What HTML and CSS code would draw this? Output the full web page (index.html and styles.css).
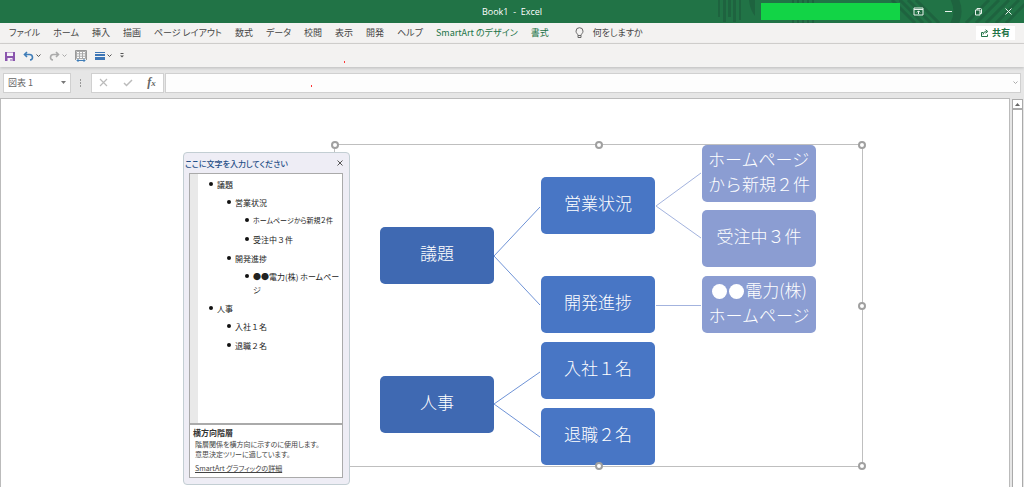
FILE: index.html
```html
<!DOCTYPE html>
<html lang="ja">
<head>
<meta charset="utf-8">
<title>Book1 - Excel</title>
<link rel="stylesheet" href="styles.css">
</head>
<body>
<div class="app">
  <header class="titlebar">
    <svg class="titlebar-art" width="320" height="23" viewBox="0 0 320 23" aria-hidden="true">
      <g fill="#1e633f">
        <path d="M14 0h2v17h-2zM19 0h3v22h-3zM24 0h3v17h-3zM29 0h3v22h-3zM35 0h2v20h-2zM45 0h6v16q-5-6-6-16z"/>
        <path d="M88 0h2v23h-2zM93 0h2v23h-2zM98 0h2v23h-2zM103 0h2v23h-2zM108 0h2v23h-2z"/>
      </g>
      <g stroke="#1e633f" stroke-width="3" fill="none">
        <path d="M188 0l23 23M196 0l23 23M204 0l23 23M212 0l23 23M262 23l23-23M272 23l23-23M282 23l23-23M292 23l23-23M302 23l23-23"/>
        <path d="M248-6q11 18 0 34" stroke-width="8"/>
      </g>
    </svg>
    <h1 class="title">Book1&nbsp; -&nbsp; Excel</h1>
    <div class="window-tools">
      <span class="account"></span>
      <button class="win-btn" aria-label="リボンの表示オプション"><svg width="11" height="9" viewBox="0 0 11 9"><path d="M1 1h9v7H1zM1 2.500h9M5.500 7V4M4 5.300l1.500-1.500L7 5.300"/></svg></button>
      <button class="win-btn" aria-label="最小化"><svg width="11" height="9" viewBox="0 0 11 9"><path d="M2 4.500h7"/></svg></button>
      <button class="win-btn" aria-label="元に戻す"><svg width="11" height="9" viewBox="0 0 11 9"><path d="M2.500 3h4.500v5H2.500zM4 3V1.500h3.500q1 0 1 1V6.500H7"/></svg></button>
      <button class="win-btn" aria-label="閉じる"><svg width="11" height="9" viewBox="0 0 11 9"><path d="M2.500 1.500l6 6M8.500 1.500l-6 6"/></svg></button>
    </div>
  </header>

  <nav class="ribbon">
    <button class="tab">ファイル</button>
    <button class="tab">ホーム</button>
    <button class="tab">挿入</button>
    <button class="tab">描画</button>
    <button class="tab">ページ レイアウト</button>
    <button class="tab">数式</button>
    <button class="tab">データ</button>
    <button class="tab">校閲</button>
    <button class="tab">表示</button>
    <button class="tab">開発</button>
    <button class="tab">ヘルプ</button>
    <button class="tab tab-context">SmartArt のデザイン</button>
    <button class="tab tab-context">書式</button>
    <button class="tab tell-me"><svg width="9" height="12" viewBox="0 0 9 12"><path d="M3 8.500C3 7 1 6.300 1 4.200a3.500 3.500 0 0 1 7 0C8 6.300 6 7 6 8.500zM3 8.500v2h3v-2"/></svg>何をしますか</button>
    <button class="share"><svg width="8" height="8" viewBox="0 0 8 8"><path d="M2 3.500H.5v4h6v-2M2 5.500q0-3 3.500-3M4.500.8l2.300 1.700-2.300 1.700"/></svg>共有</button>
  </nav>

  <div class="toolbar">
    <button class="tool" aria-label="保存"><svg width="10" height="10" viewBox="0 0 10 10"><path fill="#8a55ad" d="M0 1h10v9H0z"/><path fill="#f6f2f9" d="M2 1.500h6V5H2zM2.500 7h5v3h-1V8h-1v2h-3z"/></svg></button>
    <button class="tool" aria-label="元に戻す"><svg width="11" height="10" viewBox="0 0 11 10"><path fill="none" stroke="#3f7db8" stroke-width="1.600" d="M4 1L1.500 3.500 4 6M1.500 3.500H6.500q3 0 3 3Q9.500 8.700 7 9"/></svg><svg class="caret" width="5" height="3" viewBox="0 0 5 3"><path d="M.5.5l2 2 2-2"/></svg></button>
    <button class="tool" aria-label="やり直し"><svg width="11" height="10" viewBox="0 0 11 10"><path fill="none" stroke="#aaa" stroke-width="1.600" d="M7 1l2.500 2.500L7 6M9.500 3.500h-5q-3 0-3 3Q1.500 8.700 4 9"/></svg><svg class="caret caret-off" width="5" height="3" viewBox="0 0 5 3"><path d="M.5.5l2 2 2-2"/></svg></button>
    <button class="tool" aria-label="列の幅"><svg width="12" height="12" viewBox="0 0 12 12"><path fill="#fff" stroke="#aaa" d="M1.500 1.500h9v7h-9zM4.500 1v8M7.500 1v8M1 3.800h10M1 6.200h10"/><path fill="none" stroke="#999" d="M.5 10V.5h11V10"/><path fill="none" stroke="#3f7db8" d="M2 10.500h8M3.500 9L2 10.500 3.500 12M8.500 9l1.500 1.500L8.500 12"/></svg></button>
    <button class="tool" aria-label="線の太さ"><svg width="10" height="10" viewBox="0 0 10 10"><path fill="#3d76b6" d="M0 1h10v1H0zM0 3h10v2H0zM0 6h10v3H0z"/></svg><svg class="caret" width="5" height="3" viewBox="0 0 5 3"><path d="M.5.5l2 2 2-2"/></svg></button>
    <button class="tool" aria-label="カスタマイズ"><svg width="4" height="5" viewBox="0 0 4 5"><path fill="#555" d="M.5 0h3v1h-3zM0 2.500h4L2 4.500z"/></svg></button>
    <span class="red-dot"></span>
  </div>

  <div class="formula-bar">
    <label class="name-box"><input value="図表 1" aria-label="名前ボックス"><svg width="5" height="3" viewBox="0 0 5 3"><path fill="#777" d="M0 0h5L2.500 3z"/></svg></label>
    <svg class="grip" width="2" height="8" viewBox="0 0 2 8"><path fill="#999" d="M0 0h1v2H0zM0 3h1v2H0zM0 6h1v2H0z"/></svg>
    <div class="formula-actions">
      <button aria-label="キャンセル"><svg width="9" height="9" viewBox="0 0 9 9"><path fill="none" stroke="#bbb" stroke-width="1.200" d="M1 1l7 7M8 1L1 8"/></svg></button>
      <button aria-label="入力"><svg width="10" height="9" viewBox="0 0 10 9"><path fill="none" stroke="#bbb" stroke-width="1.500" d="M1 5l2.500 2.500L9 2"/></svg></button>
      <button class="fx" aria-label="関数の挿入"><i>f</i><i class="fx-sub">x</i></button>
    </div>
    <div class="formula-field">
      <input aria-label="数式バー">
      <span class="red-dot field-dot"></span>
      <svg class="caret caret-off" width="5" height="3" viewBox="0 0 5 3"><path d="M.5.5l2 2 2-2"/></svg>
    </div>
  </div>

  <main class="workspace">
    <div class="sheet">
      <section class="smartart" aria-label="SmartArt">
        <svg class="links" width="527" height="322" viewBox="0 0 527 322" aria-hidden="true">
          <path d="M205 62L159 111l46 49M205 227l-46 32 46 33"/>
          <path class="link-light" d="M366 28l-45 33 45 32M321 160.500h45"/>
        </svg>
        <div class="node root agenda">議題</div>
        <div class="node root people">人事</div>
        <div class="node mid sales">営業状況</div>
        <div class="node mid dev">開発進捗</div>
        <div class="node mid join">入社１名</div>
        <div class="node mid leave">退職２名</div>
        <div class="node leaf web">ホームページ<br>から新規２件</div>
        <div class="node leaf orders">受注中３件</div>
        <div class="node leaf power"><span><span class="disc"></span><span class="disc"></span>電力(株)</span>ホームページ</div>
        <span class="handle nw"></span><span class="handle n"></span><span class="handle ne"></span>
        <span class="handle e"></span><span class="handle se"></span><span class="handle s"></span>
      </section>

      <aside class="text-pane">
        <div class="pane-head">
          <h2>ここに文字を入力してください</h2>
          <button aria-label="閉じる"><svg width="6" height="6" viewBox="0 0 6 6"><path d="M.5.5l5 5M5.500.5l-5 5"/></svg></button>
        </div>
        <div class="outline">
          <ul>
            <li>議題
              <ul>
                <li>営業状況
                  <ul>
                    <li><span class="compact">ホームページから新規２件</span></li>
                    <li>受注中３件</li>
                  </ul>
                </li>
                <li>開発進捗
                  <ul>
                    <li class="kana">●●電力(株) ホームペー<br>ジ</li>
                  </ul>
                </li>
              </ul>
            </li>
            <li>人事
              <ul>
                <li>入社１名</li>
                <li>退職２名</li>
              </ul>
            </li>
          </ul>
        </div>
        <div class="about">
          <h3>横方向階層</h3>
          <p>階層関係を横方向に示すのに使用します。<br>意思決定ツリーに適しています。</p>
          <a href="#">SmartArt グラフィックの詳細</a>
        </div>
      </aside>
    </div>
    <div class="scrollbar">
      <button aria-label="上へ"><svg width="5" height="3" viewBox="0 0 5 3"><path fill="#666" d="M0 3h5L2.500 0z"/></svg></button>
      <div class="thumb"></div>
    </div>
  </main>
</div>
</body>
</html>
```

FILE: styles.css
```css
* { box-sizing: border-box; }

body {
  margin: 0;
  font-family: "Noto Sans CJK JP", "Open Sans", sans-serif;
  font-size: 9px;
  font-feature-settings: "palt";
  color: #444;
}

button, input {
  font: inherit;
  font-feature-settings: inherit;
  color: inherit;
  border: 0;
  padding: 0;
  margin: 0;
  background: none;
}

svg { display: block; flex: none; }
h1, h2, h3, p, ul { margin: 0; padding: 0; }

.app {
  display: flex;
  flex-direction: column;
  height: 100vh;
  overflow: hidden;
  background: #e6e6e6;
}

/* Title bar */
.titlebar {
  position: relative;
  display: grid;
  grid-template-columns: 1fr auto 1fr;
  align-items: center;
  height: 23px;
  flex: none;
  background: #217346;
  color: #fff;
}
.titlebar-art { position: absolute; right: 0; top: 0; }
.title {
  grid-column: 2;
  font: 400 9px/20px "Open Sans", sans-serif;
}
.window-tools {
  position: relative;
  display: flex;
  align-items: center;
  justify-content: flex-end;
  padding-right: 1px;
}
.account {
  width: 139px;
  height: 17px;
  margin-right: 3px;
  background: #12d446;
}
.win-btn {
  display: flex;
  justify-content: center;
  width: 30px;
}
.win-btn svg { fill: none; stroke: #e8f2ec; }

/* Ribbon tabs */
.ribbon {
  display: flex;
  align-items: center;
  gap: 13px;
  height: 21px;
  flex: none;
  padding: 0 9px;
  background: #f3f2f1;
  border-bottom: 1px solid #d2d0ce;
}
.tab { white-space: nowrap; line-height: 20px; }
.tab-context { color: #217346; }
.tell-me {
  display: flex;
  align-items: center;
  gap: 9px;
  margin-left: 13px;
}
.tell-me svg { fill: none; stroke: #666; }
.share {
  display: flex;
  align-items: center;
  justify-content: center;
  gap: 3px;
  width: 39px;
  height: 14px;
  margin-left: auto;
  background: #fff;
  color: #217346;
  font-weight: 700;
  line-height: 14px;
}
.share svg { fill: none; stroke: #217346; }

/* Quick access toolbar */
.toolbar {
  position: relative;
  display: flex;
  align-items: center;
  gap: 8px;
  height: 23px;
  flex: none;
  padding: 0 5px;
  background: #f3f2f1;
  box-shadow: 0 1px 3px #bbb;
}
.tool { display: flex; align-items: center; gap: 2px; }
.caret { fill: none; stroke: #555; }
.caret-off { stroke: #aaa; }
.red-dot {
  position: absolute;
  left: 344px;
  top: 17px;
  width: 1px;
  height: 2px;
  background: #f33;
}

/* Formula bar */
.formula-bar {
  display: flex;
  align-items: center;
  height: 31px;
  flex: none;
  padding: 0 3px;
}
.name-box {
  display: flex;
  align-items: center;
  width: 68px;
  height: 20px;
  padding: 0 4px;
  background: #fff;
  border: 1px solid #d0d0d0;
}
.name-box input { flex: 1; min-width: 0; color: #666; }
.grip { margin: 0 9px; }
.formula-actions {
  display: flex;
  align-items: center;
  justify-content: space-around;
  width: 73px;
  height: 20px;
  margin-right: 1px;
  background: #fff;
  border: 1px solid #d0d0d0;
}
.fx { font: 700 12px/16px "Liberation Serif", serif; color: #666; }
.fx-sub { font-size: 9px; }
.formula-field {
  position: relative;
  display: flex;
  align-items: center;
  flex: 1;
  height: 20px;
  padding-right: 2px;
  background: #fdfdfd;
  border: 1px solid #d0d0d0;
}
.formula-field input { flex: 1; }
.field-dot { left: 145px; top: 11px; }

/* Worksheet */
.workspace { display: flex; flex: 1; min-height: 0; }
.sheet {
  position: relative;
  flex: 1;
  overflow: hidden;
  background: #fff;
  border: solid #bbb;
  border-width: 1px 1px 0;
}
.scrollbar {
  display: flex;
  flex-direction: column;
  width: 11px;
  margin: 1px 1px 0 2px;
}
.scrollbar button {
  display: flex;
  align-items: center;
  justify-content: center;
  height: 10px;
  background: #fff;
  border: 1px solid #aaa;
}
.thumb { flex: 1; background: #fff; border: 1px solid #aaa; border-bottom: 0; }

/* SmartArt canvas */
.smartart {
  position: absolute;
  left: 333px;
  top: 45px;
  width: 529px;
  height: 323px;
  border: 1px solid #bfbfbf;
}
.links { position: absolute; left: 0; top: 0; fill: none; stroke: #6f93d6; }
.link-light { stroke: #a3b3de; }
.node {
  position: absolute;
  display: flex;
  flex-direction: column;
  align-items: center;
  justify-content: center;
  width: 114px;
  height: 57px;
  padding-bottom: 6px;
  border-radius: 5px;
  color: #fff;
  font-size: 17px;
  font-weight: 300;
  line-height: 25px;
  font-feature-settings: normal;
  white-space: nowrap;
}
.root { left: 45px; background: #3f69b2; }
.mid { left: 206px; background: #4876c5; }
.leaf { left: 367px; background: #8b9dd2; }
.agenda { top: 82px; }
.people { top: 231px; }
.sales { top: 32px; }
.dev { top: 131px; }
.join { top: 197px; }
.leave { top: 263px; }
.web { top: 0; }
.orders { top: 65px; }
.power { top: 131px; }
.disc {
  display: inline-block;
  width: 15px;
  height: 15px;
  margin: 0 1px;
  border-radius: 50%;
  background: #fff;
  vertical-align: -2px;
}
.handle {
  position: absolute;
  width: 8px;
  height: 8px;
  margin: -4px;
  border: 2px solid #a0a0a0;
  border-radius: 50%;
  background: #fff;
}
.nw { left: 0; top: 0; }
.n { left: 50%; top: 0; }
.ne { left: 100%; top: 0; }
.e { left: 100%; top: 50%; }
.se { left: 100%; top: 100%; }
.s { left: 50%; top: 100%; }

/* Text pane */
.text-pane {
  position: absolute;
  left: 182px;
  top: 53px;
  display: flex;
  flex-direction: column;
  width: 167px;
  height: 333px;
  padding: 0 6px 6px 5px;
  background: #eeedf5;
  border: 1px solid #c3ced3;
  border-radius: 4px;
  font-size: 8px;
  color: #222;
}
.pane-head {
  display: flex;
  align-items: center;
  justify-content: space-between;
  height: 20px;
  flex: none;
  margin-left: -4px;
}
.pane-head h2 { font-size: 8px; font-weight: 500; color: #1f4e86; }
.pane-head svg { fill: none; stroke: #555; }
.outline {
  flex: 1;
  padding: 4px 1px 0 13px;
  background: linear-gradient(to right, #e9e9e9 8px, #fff 8px);
  border: 1px solid #aaa;
  line-height: 13px;
  font-feature-settings: normal;
}
.outline ul { list-style: none; }
.outline li { position: relative; padding-left: 14px; }
.outline li::before {
  content: "";
  position: absolute;
  left: 6px;
  top: 4px;
  width: 4px;
  height: 4px;
  border-radius: 50%;
  background: #111;
}
.outline li + li { margin-top: 6px; }
.outline li > ul { margin: 5px 0 0 4px; }
.compact { display: block; font-size: 7px; font-feature-settings: "palt"; }
.kana { font-feature-settings: "palt"; }
.about {
  padding: 2px 3px 3px;
  background: #fff;
  border: 1px solid #aaa;
  color: #444;
  font-size: 7px;
  line-height: 10px;
}
.about h3 { font-size: 8px; line-height: 12px; color: #333; }
.about p { margin-left: 2px; white-space: nowrap; }
.about a { display: block; margin: 3px 0 0 2px; color: #444; line-height: 12px; }
```
